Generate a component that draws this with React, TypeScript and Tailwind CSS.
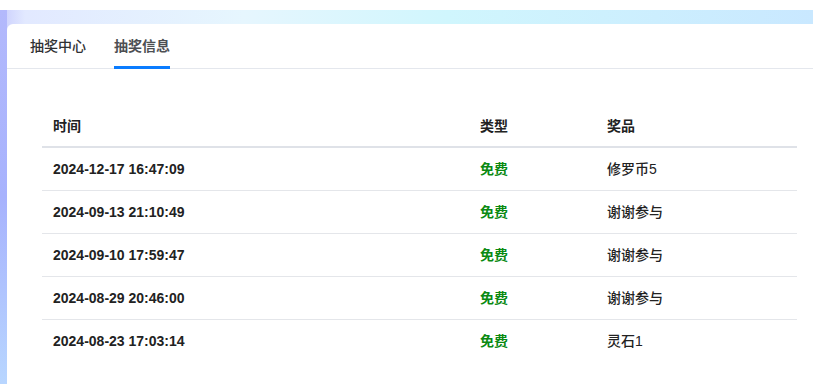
import React from "react";

const rows = [
  { time: "2024-12-17 16:47:09", type: "免费", prize: "修罗币5" },
  { time: "2024-09-13 21:10:49", type: "免费", prize: "谢谢参与" },
  { time: "2024-09-10 17:59:47", type: "免费", prize: "谢谢参与" },
  { time: "2024-08-29 20:46:00", type: "免费", prize: "谢谢参与" },
  { time: "2024-08-23 17:03:14", type: "免费", prize: "灵石1" },
];

export default function App() {
  return (
    <div
      className="w-[813px] h-[384px] overflow-hidden bg-white pt-[10px]"
      style={{ fontFamily: '"Liberation Sans", "Noto Sans CJK SC", sans-serif' }}
    >
      <div className="flex h-[374px] bg-[linear-gradient(to_right,#c9cdfd_0px,#e2e9ff_25px,#e6f6fe_30%,#d0f6fd_55%,#c9e8ff_100%)]">
        <div className="w-[7px] shrink-0 bg-[linear-gradient(to_bottom,#b3b9fc,#a7b2fd_50%,#b8d6ff)]" />
        <div className="flex flex-col pt-[14px] shrink-0">
          <div className="w-[825px] flex-1 bg-white rounded-tl-[6px]">
            <div className="flex h-[45px] border-b border-[#e4e7ed] pl-[23px] gap-[28px]">
              <div className="h-full flex items-center text-[14px] text-[#303133] font-medium">
                抽奖中心
              </div>
              <div className="relative h-full flex items-center text-[14px] text-[#4d4f53] font-bold">
                抽奖信息
                <div className="absolute left-0 right-0 bottom-[-1px] h-[3px] bg-[#0a7cff]" />
              </div>
            </div>
            <div className="px-[35px] pt-[37px]">
              <div className="grid grid-cols-[427px_127px_1fr] h-[42px] items-center border-b-2 border-[#dfe2e8] text-[14px] font-bold text-[#222]">
                <div className="pl-[11px]">时间</div>
                <div className="pl-[11px]">类型</div>
                <div className="pl-[11px]">奖品</div>
              </div>
              {rows.map((r, i) => (
                <div
                  key={i}
                  className={`grid grid-cols-[427px_127px_1fr] h-[43px] items-center text-[14px] text-[#222] ${
                    i < rows.length - 1 ? "border-b border-[#e4e6ea]" : ""
                  }`}
                >
                  <div className="pl-[11px] font-bold">{r.time}</div>
                  <div className="pl-[11px] font-bold text-[#0a8a12]">{r.type}</div>
                  <div className="pl-[11px] font-medium">{r.prize}</div>
                </div>
              ))}
            </div>
          </div>
        </div>
      </div>
    </div>
  );
}
